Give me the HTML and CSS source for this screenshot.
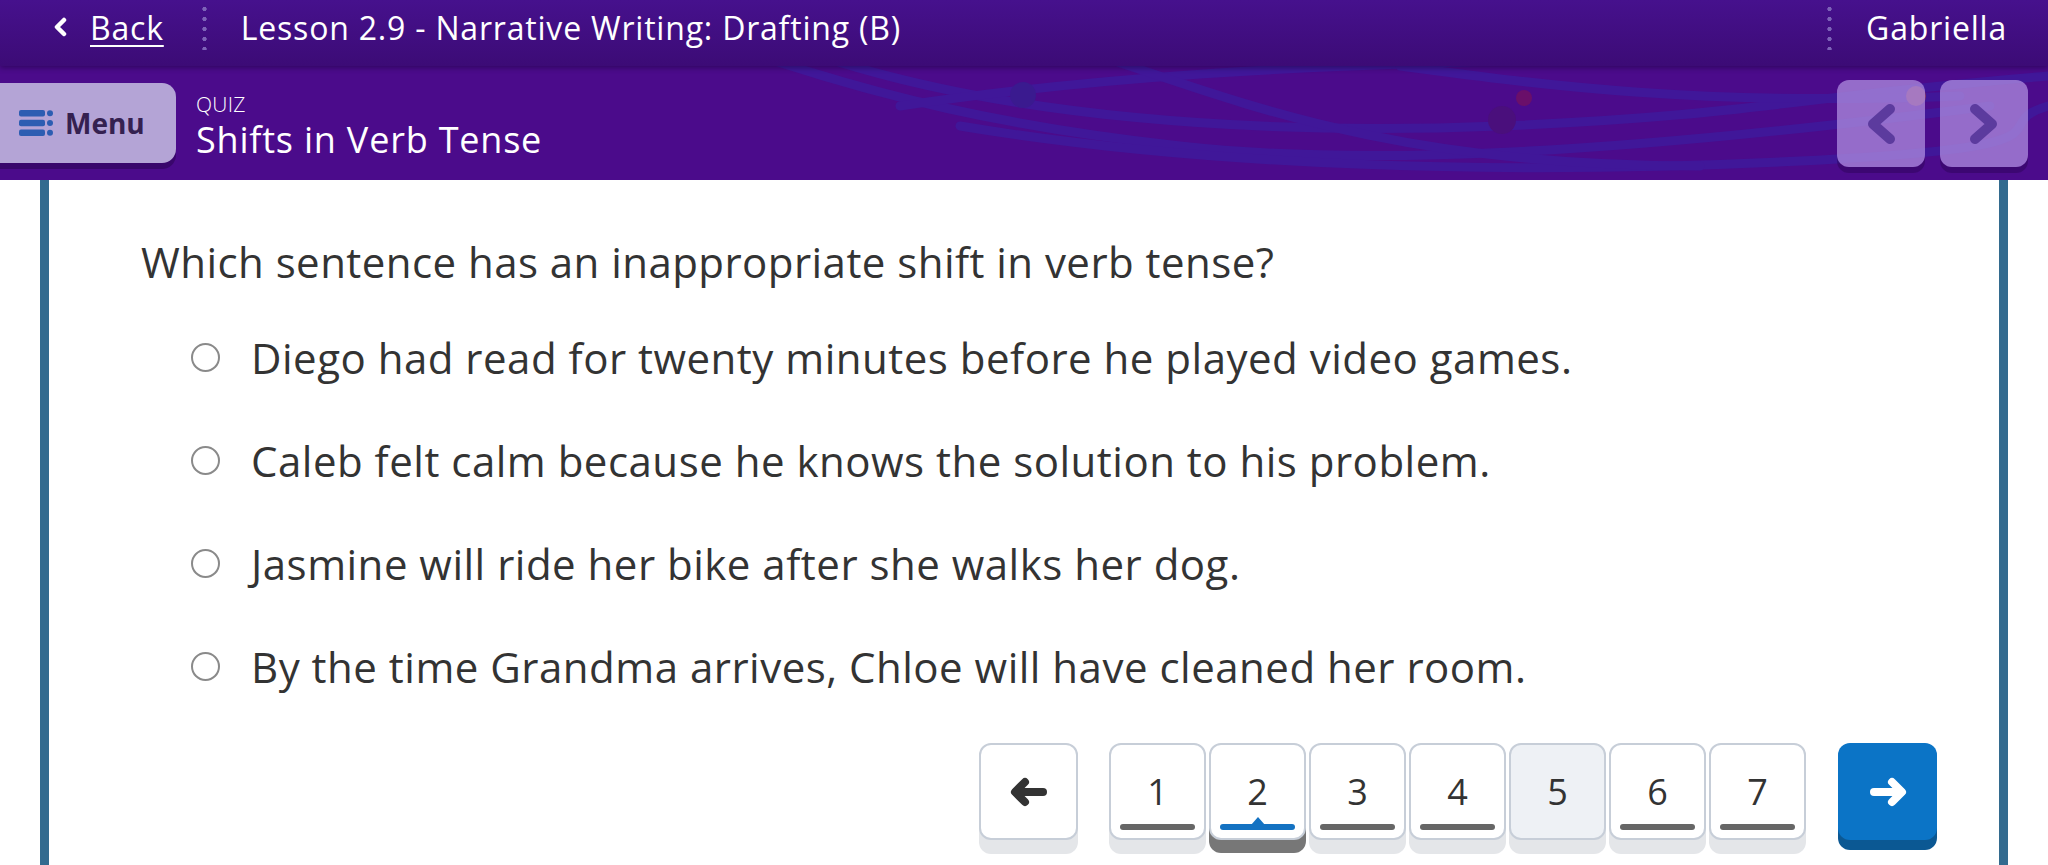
FILE: index.html
```html
<!DOCTYPE html>
<html lang="en">
<head>
<meta charset="utf-8">
<title>Shifts in Verb Tense</title>
<link rel="stylesheet" href="styles.css">
</head>
<body>
<header class="topbar">
  <a class="back" href="#">
    <svg class="back-chev" viewBox="0 0 14 20" width="14" height="20"><path d="M11 3 L4 10 L11 17" fill="none" stroke="#fff" stroke-width="4.5" stroke-linecap="round" stroke-linejoin="round"/></svg>
    <span class="back-label">Back</span>
  </a>
  <span class="sep"></span>
  <span class="lesson">Lesson 2.9 - Narrative Writing: Drafting (B)</span>
  <span class="spacer"></span>
  <span class="sep"></span>
  <span class="user">Gabriella</span>
</header>

<div class="subheader">
  <svg class="deco" viewBox="0 0 2048 114" width="2048" height="114" preserveAspectRatio="none">
    <g fill="none" stroke="#3a1fa3" stroke-width="9" stroke-linecap="round" opacity="0.6">
      <path d="M760 -10 C 880 30, 1000 60, 1180 80 S 1600 90, 1990 40"/>
      <path d="M820 -10 C 1000 50, 1250 70, 1500 60 S 1800 30, 2048 10"/>
      <path d="M900 40 C 1100 10, 1300 0, 1500 -5"/>
      <path d="M960 60 C 1200 100, 1500 110, 1800 95 S 1980 60, 2048 40"/>
      <path d="M1100 -10 C 1250 40, 1400 100, 1700 100"/>
      <path d="M1400 0 C 1550 20, 1700 40, 1960 30"/>
    </g>
    <circle cx="1023" cy="29" r="13" fill="#3a1a8f"/>
    <circle cx="1502" cy="54" r="14" fill="#4a0f7c"/>
    <circle cx="1524" cy="32" r="8" fill="#6a0f6a"/>
    <circle cx="1916" cy="30" r="10" fill="#8a3a6a"/>
  </svg>
  <button class="menu-btn">
    <svg class="menu-ico" viewBox="0 0 34 26" width="34" height="26">
      <g fill="#2d5db2">
        <rect x="0" y="0" width="26" height="6.5" rx="2"/>
        <rect x="0" y="9.7" width="26" height="6.5" rx="2"/>
        <rect x="0" y="19.4" width="26" height="6.5" rx="2"/>
        <circle cx="31" cy="3.2" r="3"/>
        <circle cx="31" cy="13" r="3"/>
        <circle cx="31" cy="22.7" r="3"/>
      </g>
    </svg>
    <span>Menu</span>
  </button>
  <div class="titles">
    <div class="kind">QUIZ</div>
    <h1 class="title">Shifts in Verb Tense</h1>
  </div>
  <div class="navs">
    <button class="nav-btn"><svg viewBox="0 0 32 40" width="32" height="40"><path d="M25 5 L8 20 L25 35" fill="none" stroke="#5c3b9e" stroke-width="10" stroke-linecap="round" stroke-linejoin="round"/></svg></button>
    <button class="nav-btn"><svg viewBox="0 0 32 40" width="32" height="40"><path d="M7 5 L24 20 L7 35" fill="none" stroke="#5c3b9e" stroke-width="10" stroke-linecap="round" stroke-linejoin="round"/></svg></button>
  </div>
</div>

<main class="card">
  <p class="question">Which sentence has an inappropriate shift in verb tense?</p>
  <ul class="options">
    <li class="option"><span class="radio"></span><span class="opt-text">Diego had read for twenty minutes before he played video games.</span></li>
    <li class="option"><span class="radio"></span><span class="opt-text">Caleb felt calm because he knows the solution to his problem.</span></li>
    <li class="option"><span class="radio"></span><span class="opt-text">Jasmine will ride her bike after she walks her dog.</span></li>
    <li class="option"><span class="radio"></span><span class="opt-text">By the time Grandma arrives, Chloe will have cleaned her room.</span></li>
  </ul>
  <nav class="pager">
    <button class="pg-arrow prev">
      <svg viewBox="0 0 40 30" width="40" height="30"><g fill="none" stroke="#333" stroke-width="8" stroke-linecap="round" stroke-linejoin="round"><path d="M16 5 L6 15 L16 25"/><path d="M7 15 H34"/></g></svg>
    </button>
    <div class="pg-nums">
      <button class="pg-num"><span class="num">1</span><span class="bar"></span></button>
      <button class="pg-num current"><span class="num">2</span><span class="bar"></span></button>
      <button class="pg-num"><span class="num">3</span><span class="bar"></span></button>
      <button class="pg-num"><span class="num">4</span><span class="bar"></span></button>
      <button class="pg-num seen"><span class="num">5</span><span class="bar"></span></button>
      <button class="pg-num"><span class="num">6</span><span class="bar"></span></button>
      <button class="pg-num"><span class="num">7</span><span class="bar"></span></button>
    </div>
    <button class="pg-arrow next">
      <svg viewBox="0 0 40 30" width="40" height="30"><g fill="none" stroke="#fff" stroke-width="8" stroke-linecap="round" stroke-linejoin="round"><path d="M24 5 L34 15 L24 25"/><path d="M6 15 H33"/></g></svg>
    </button>
  </nav>
</main>
</body>
</html>
```

FILE: styles.css
```css
html, body {
  margin: 0;
  padding: 0;
}
body {
  width: 2048px;
  height: 865px;
  overflow: hidden;
  background: #fff;
  font-family: "Open Sans", "Noto Sans", sans-serif;
  color: #333;
}
button {
  font-family: inherit;
  border: none;
  padding: 0;
  cursor: pointer;
}

/* ---------- top bar ---------- */
.topbar {
  position: relative;
  z-index: 2;
  box-sizing: border-box;
  height: 66px;
  display: flex;
  align-items: center;
  padding: 0 41px 12px 53px;
  background: linear-gradient(#46118d, #3c0b76);
  box-shadow: 0 2px 5px rgba(20, 0, 50, 0.45);
  color: #fff;
  font-size: 32px;
  letter-spacing: 0.8px;
}
.back {
  display: flex;
  align-items: center;
  gap: 23px;
  color: #fff;
  text-decoration: none;
}
.back-chev {
  display: block;
}
.back-label {
  text-decoration: underline;
  text-underline-offset: 5px;
  text-decoration-thickness: 2px;
}
.sep {
  width: 5px;
  height: 46px;
  margin: 0 34px 0 38px;
  background-image: radial-gradient(circle, #7d63b8 1.9px, transparent 2.4px);
  background-size: 5px 10px;
  background-position: 0 0;
}
.lesson {
  white-space: nowrap;
}
.spacer {
  flex: 1;
}
.user {
  white-space: nowrap;
}

/* ---------- sub header ---------- */
.subheader {
  position: relative;
  height: 114px;
  display: flex;
  align-items: flex-start;
  background: #4b0b8b;
  overflow: hidden;
}
.deco {
  position: absolute;
  left: 0;
  top: 0;
  z-index: 0;
  pointer-events: none;
}
.menu-btn {
  position: relative;
  z-index: 1;
  box-sizing: border-box;
  margin-top: 17px;
  width: 176px;
  height: 80px;
  display: flex;
  align-items: center;
  gap: 12px;
  padding-left: 19px;
  background: #b4a4d6;
  border-radius: 0 14px 14px 0;
  box-shadow: 0 6px 0 rgba(35, 0, 70, 0.45);
  color: #352150;
  font-size: 28px;
  font-weight: 700;
}
.menu-ico {
  display: block;
}
.titles {
  position: relative;
  z-index: 1;
  margin-left: 20px;
  padding-top: 25px;
  color: #fff;
}
.kind {
  font-size: 21px;
  line-height: 26px;
  font-weight: 300;
  letter-spacing: 0.3px;
}
.title {
  margin: 0;
  font-size: 36px;
  line-height: 46px;
  font-weight: 500;
  letter-spacing: 0.8px;
}
.navs {
  position: relative;
  z-index: 1;
  margin-left: auto;
  margin-top: 14px;
  padding-right: 20px;
  display: flex;
  gap: 15px;
}
.nav-btn {
  width: 88px;
  height: 87px;
  border-radius: 12px;
  background: rgba(178, 146, 226, 0.72);
  box-shadow: 0 6px 0 rgba(35, 0, 70, 0.35);
  display: flex;
  align-items: center;
  justify-content: center;
}
.nav-btn svg {
  display: block;
}

/* ---------- card ---------- */
.card {
  box-sizing: border-box;
  margin: 0 40px;
  height: 685px;
  padding: 52px 62px 0 92px;
  border-left: 9px solid #336b8f;
  border-right: 9px solid #336b8f;
  background: #fff;
}
.question {
  margin: 0 0 14px;
  font-size: 42px;
  line-height: 60px;
  letter-spacing: 0.45px;
  color: #333;
}
.options {
  list-style: none;
  margin: 0;
  padding: 0 0 0 50px;
}
.option {
  height: 103px;
  display: flex;
  align-items: center;
  gap: 31px;
}
.radio {
  box-sizing: border-box;
  flex: none;
  width: 29px;
  height: 29px;
  border-radius: 50%;
  border: 2px solid #8a8a8a;
  background: #fff;
}
.opt-text {
  font-size: 42px;
  letter-spacing: 0.5px;
  color: #333;
  white-space: nowrap;
}

/* ---------- pager ---------- */
.pager {
  margin-top: 25px;
  display: flex;
  justify-content: flex-end;
  align-items: flex-start;
  gap: 31px;
}
.pg-nums {
  display: flex;
  gap: 3px;
}
.pg-arrow,
.pg-num {
  box-sizing: border-box;
  height: 97px;
  border-radius: 12px;
}
.pg-arrow {
  width: 99px;
  display: flex;
  align-items: center;
  justify-content: center;
}
.pg-arrow svg {
  display: block;
}
.prev {
  background: #fff;
  border: 2px solid #c7ced8;
  box-shadow: 0 14px 0 #e4e6e9;
}
.next {
  margin-left: 1px;
  background: #0b74c6;
  box-shadow: 0 10px 0 #0b5893;
}
.pg-num {
  position: relative;
  width: 97px;
  display: flex;
  flex-direction: column;
  align-items: center;
  justify-content: flex-end;
  padding-bottom: 8px;
  background: #fff;
  border: 2px solid #c7ced8;
  box-shadow: 0 14px 0 #e4e6e9;
  color: #333;
}
.num {
  font-size: 36px;
  line-height: 40px;
  margin-bottom: 12px;
}
.bar {
  position: relative;
  width: 75px;
  height: 6px;
  border-radius: 3px;
  background: #666;
}
.current {
  box-shadow: 0 13px 0 #777;
}
.current .bar {
  background: #1472c2;
}
.current .bar::before {
  content: "";
  position: absolute;
  left: 50%;
  top: -7px;
  margin-left: -7px;
  border-left: 7px solid transparent;
  border-right: 7px solid transparent;
  border-bottom: 8px solid #1472c2;
}
.seen {
  background: #eef1f5;
}
.seen .bar {
  background: transparent;
}
```
